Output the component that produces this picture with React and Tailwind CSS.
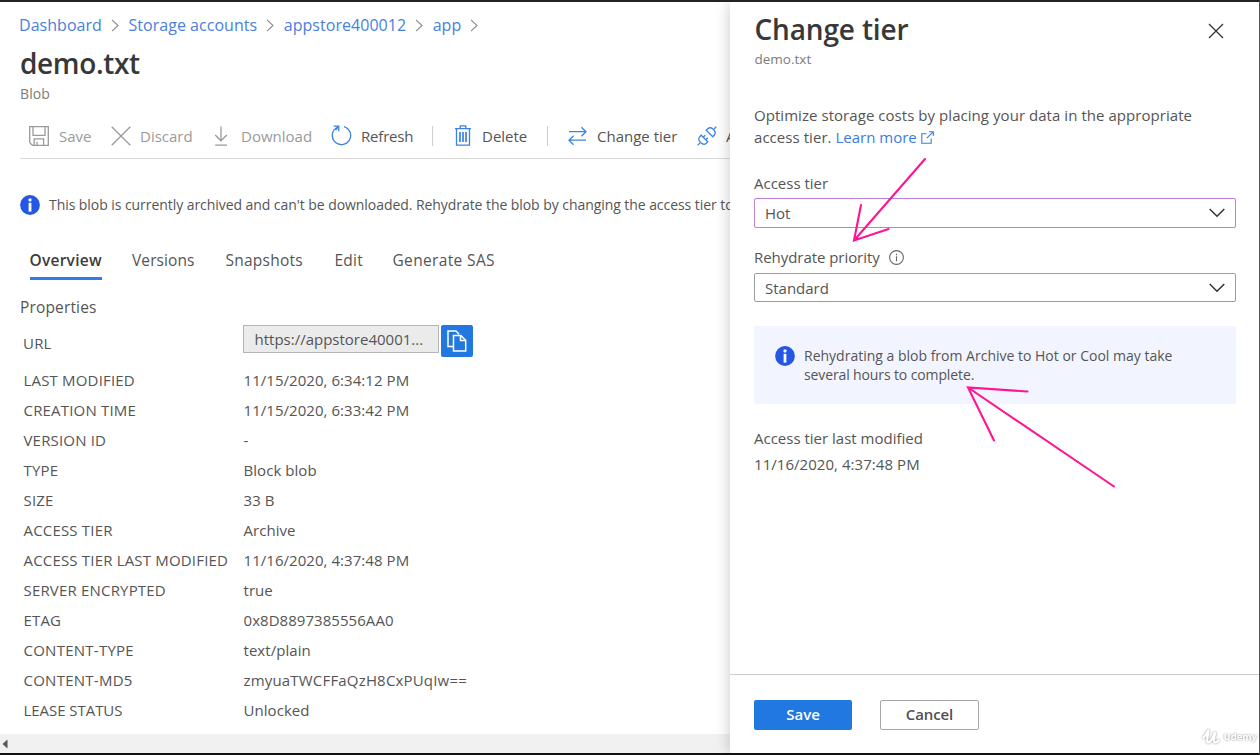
import React from "react";

const crumbs = ["Dashboard", "Storage accounts", "appstore400012", "app"];

const rows = [
  ["LAST MODIFIED", "11/15/2020, 6:34:12 PM"],
  ["CREATION TIME", "11/15/2020, 6:33:42 PM"],
  ["VERSION ID", "-"],
  ["TYPE", "Block blob"],
  ["SIZE", "33 B"],
  ["ACCESS TIER", "Archive"],
  ["ACCESS TIER LAST MODIFIED", "11/16/2020, 4:37:48 PM"],
  ["SERVER ENCRYPTED", "true"],
  ["ETAG", "0x8D8897385556AA0"],
  ["CONTENT-TYPE", "text/plain", "tracking-[0.25px]"],
  ["CONTENT-MD5", "zmyuaTWCFFaQzH8CxPUqIw==", "tracking-[0.25px]", "tracking-[0.18px]"],
  ["LEASE STATUS", "Unlocked", "tracking-[-0.05px]"],
];

function Svg({ w, h, className = "", children, sw = 1.3 }) {
  return (
    <svg
      width={w}
      height={h}
      viewBox={`0 0 ${w} ${h}`}
      fill="none"
      stroke="currentColor"
      strokeWidth={sw}
      className={`shrink-0 ${className}`}
    >
      {children}
    </svg>
  );
}

const SaveIcon = () => (
  <Svg w={20} h={20} className="text-[#9a9a9a]">
    <path d="M.7.7h18.6v18.6H3.4L.7 16.6z" />
    <path d="M4 .7v8.6h12V.7M5.2 19.3v-6.500h9.4v6.500M8 19v-3.3" />
  </Svg>
);
const DiscardIcon = () => (
  <Svg w={20} h={20} className="text-[#9a9a9a]">
    <path d="M.7.7l18.6 18.6M19.3.7L.7 19.3" />
  </Svg>
);
const DownloadIcon = () => (
  <Svg w={16} h={20} className="text-[#9a9a9a]">
    <path d="M8 .5v14M2.2 9L8 14.8 13.8 9M2.2 19.2h11.8" />
  </Svg>
);
const RefreshIcon = () => (
  <Svg w={21} h={21} className="text-[#3b82e6]">
    <path d="M13 1.6a9.2 9.2 0 1 1-6.2.4M2.6 1.2h5.2v5M7.8 1.4L4.6 5" />
  </Svg>
);
const TrashIcon = () => (
  <Svg w={16} h={21} className="text-[#3b82e6]">
    <path d="M0 3.6h16M5.2 3.4V.9h5.6v2.500" />
    <path d="M1.5 3.8v16.4h13V3.8" />
    <path d="M5 7v10M8 7v10M11 7v10" strokeWidth="1.7" />
  </Svg>
);
const SwapIcon = () => (
  <Svg w={19} h={20} className="text-[#3b82e6]">
    <path d="M1 5.7h17M13.4 1.2L18 5.7l-4.6 4.6M18 14.2H1M5.6 9.7L1 14.2l4.6 4.6" />
  </Svg>
);
const PlugIcon = () => (
  <Svg w={20} h={20} className="text-[#3b82e6]">
    <path d="M.6 19.4l2.500-2.500M17 3L19.400.6" />
    <path d="M4.200 9.200l6.600 6.600-1.500 1.400a4 4 0 0 1-5.100-.1l-1.300-1.300a4 4 0 0 1-.1-5.100z" />
    <path d="M15.800 10.800L9.200 4.200l1.500-1.400a4 4 0 0 1 5.100.1l1.300 1.300a4 4 0 0 1 .1 5.100z" />
    <path d="M6.200 11.200l2-2M8.800 13.800l2-2" />
  </Svg>
);
const CopyIcon = () => (
  <Svg w={20} h={22} sw={1.5} className="text-white">
    <path d="M6 16.5H1V1h8l3 3.2" />
    <path d="M6.5 5.5h7.3l4.9 4.8V21H6.5zM13.5 5.8v4.8h5" />
  </Svg>
);
const ExternalIcon = () => (
  <Svg w={13} h={13} sw={1.1} className="text-[#3b7de0]">
    <path d="M5.5 2.8H.8v9.4h9.4V7.5M8 .7h4.3V5M12.2.8L5.8 7.2" />
  </Svg>
);
const ChevronDown = () => (
  <Svg w={16} h={10} sw={1.5} className="text-[#333]">
    <path d="M.7 1l7.3 7.3L15.3 1" />
  </Svg>
);
const Crumb = () => (
  <Svg w={8} h={13} sw={1.1} className="text-[#8c8c8c]">
    <path d="M1 .8l6 5.7-6 5.7" />
  </Svg>
);
const InfoBadge = () => (
  <svg width="20" height="20" viewBox="0 0 20 20" className="shrink-0">
    <circle cx="10" cy="10" r="9.9" fill="#2458e4" />
    <rect x="8.5" y="3.6" width="3" height="2.8" rx=".8" fill="#fff" />
    <rect x="8.6" y="7.8" width="2.8" height="8.8" fill="#fff" />
  </svg>
);

function Select({ label, className }) {
  return (
    <div className={`flex items-center justify-between rounded-[2px] border bg-white pr-[10px] pl-[10px] ${className}`}>
      <span>{label}</span>
      <ChevronDown />
    </div>
  );
}

export default function App() {
  return (
    <div className="relative flex h-[755px] w-[1260px] overflow-hidden border-t-2 border-r border-b-2 border-t-[#222] border-r-[#555] border-b-[#111] bg-white font-['Open_Sans','Noto_Sans',sans-serif] text-[15px] leading-[20px] whitespace-nowrap text-[#555]">
      <main className="flex w-[730px] shrink-0 flex-col overflow-hidden">
        <nav className="flex h-[46px] shrink-0 items-center pl-[19px] text-[16px] tracking-[0.04px] text-[#4a80dc]">
          {crumbs.map((c) => (
            <React.Fragment key={c}>
              <span className="mr-[9px]">{c}</span>
              <span className="mr-[9.5px]">
                <Crumb />
              </span>
            </React.Fragment>
          ))}
        </nav>
        <h1 className="-mt-[3px] h-[39px] shrink-0 pl-[20px] text-[28px] leading-[36px] font-semibold tracking-[-0.35px] text-[#383838]">demo.txt</h1>
        <p className="h-[20px] shrink-0 pl-[20px] text-[14px] tracking-[0.1px] text-[#7c7c7c]">Blob</p>

        <div className="mt-[12px] ml-[20px] flex h-[43px] shrink-0 items-center border-b border-[#d8d8d8] pb-[3px] pl-[9px]">
          <div className="flex w-[82px] shrink-0 items-center gap-[10px] text-[#9a9a9a]">
            <SaveIcon />
            Save
          </div>
          <div className="flex w-[102px] shrink-0 items-center gap-[9px] text-[#9a9a9a]">
            <DiscardIcon />
            Discard
          </div>
          <div className="flex w-[118px] shrink-0 items-center gap-[12px] text-[#9a9a9a]">
            <DownloadIcon />
            Download
          </div>
          <div className="flex w-[101px] shrink-0 items-center gap-[9px] tracking-[-0.2px]">
            <RefreshIcon />
            Refresh
          </div>
          <span className="h-[20px] w-px shrink-0 bg-[#cfcfcf]" />
          <div className="flex w-[114px] shrink-0 items-center gap-[11px] pl-[22px]">
            <TrashIcon />
            Delete
          </div>
          <span className="h-[20px] w-px shrink-0 bg-[#cfcfcf]" />
          <div className="flex w-[149px] shrink-0 items-center gap-[10px] pl-[20px]">
            <SwapIcon />
            Change tier
          </div>
          <div className="flex shrink-0 items-center gap-[9px]">
            <PlugIcon />
            Acquire lease
          </div>
        </div>

        <div className="flex h-[92px] shrink-0 items-center gap-[9.5px] pl-[19.5px] text-[14px] tracking-[-0.06px]">
          <InfoBadge />
          <span>
            This blob is currently archived and can&apos;t be downloaded. Rehydrate the blob by changing the access tier to hot or cool.
          </span>
        </div>

        <div className="-mt-px flex h-[30px] shrink-0 pl-[29.5px] text-[15.5px] tracking-[0.25px]">
          <div className="mr-[30px] w-[72.5px] border-b-[3px] border-[#2f7de0] font-semibold text-[#3c3c3c]">Overview</div>
          <div className="w-[93.5px] tracking-[0.1px]">Versions</div>
          <div className="w-[109px]">Snapshots</div>
          <div className="w-[58px]">Edit</div>
          <div className="tracking-[0.35px]">Generate SAS</div>
        </div>

        <h2 className="mt-[17px] h-[20px] shrink-0 pl-[20px] text-[15.5px] tracking-[0.15px]">Properties</h2>
        <div className="mt-[8px] flex h-[34px] shrink-0 pl-[23px]">
          <div className="w-[220px] pt-[8px] tracking-[0.2px]">URL</div>
          <div className="flex h-[28px] w-[196px] items-center border border-[#b4b4b4] bg-[#ebebeb] pb-px pl-[10.5px]">https://appstore40001...</div>
          <button className="ml-[2px] flex h-[32px] w-[32px] items-center justify-center rounded-[2px] bg-[#2178e0]">
            <CopyIcon />
          </button>
        </div>

        <div className="mt-[6px] shrink-0 pl-[23.5px]">
          {rows.map(([k, v, kt = "tracking-[0.18px]", vt = "tracking-[0.05px]"]) => (
            <div key={k} className="flex h-[30px] items-center pb-px">
              <span className={`w-[220px] ${kt}`}>{k}</span>
              <span className={vt}>{v}</span>
            </div>
          ))}
        </div>

        <div className="mt-auto flex h-[19px] shrink-0 items-center bg-[#f1f1f1] pl-[2px]">
          <svg width="6" height="10" viewBox="0 0 6 10">
            <path d="M5.5.5v9L.5 5z" fill="#555" />
          </svg>
        </div>
      </main>

      <aside className="relative flex flex-1 flex-col bg-white shadow-[0_0_14px_rgba(0,0,0,0.22)]">
        <header className="flex h-[72px] justify-between pt-[8px] pr-[35px] pl-[24.5px]">
          <div>
            <h1 className="text-[28px] leading-[38px] font-semibold tracking-[-0.15px] text-[#383838]">Change tier</h1>
            <p className="mt-px text-[13.5px] leading-[20px] text-[#7c7c7c]">demo.txt</p>
          </div>
          <Svg w={16} h={16} className="mt-[13px] text-[#333]">
            <path d="M1 1l14 14M15 1L1 15" />
          </Svg>
        </header>

        <div className="flex-1 pr-[23px] pl-[24px]">
          <p className="mt-[31px] leading-[21.5px] tracking-[0.05px]">
            Optimize storage costs by placing your data in the appropriate
            <br />
            access tier.{" "}
            <a className="inline-flex items-center gap-[4px] tracking-[0px] text-[#3b7de0]">
              Learn more <ExternalIcon />
            </a>
          </p>
          <div className="mt-[25px] h-[25px]">Access tier</div>
          <Select label="Hot" className="h-[30px] border-[#bd7fd0]" />
          <div className="mt-[19px] flex h-[26px] items-start gap-[9.5px] tracking-[-0.05px]">
            Rehydrate priority
            <Svg w={15} h={15} sw={1.1} className="mt-[3px] text-[#666]">
              <circle cx="7.5" cy="7.5" r="6.9" />
              <path d="M7.5 6.3v5M7.5 3.8v1.4" />
            </Svg>
          </div>
          <Select label="Standard" className="h-[29px] border-[#9c9c9c]" />

          <div className="mt-[24px] flex h-[78px] gap-[9px] rounded-[2px] bg-[#f2f5ff] pt-[20px] pl-[21px]">
            <InfoBadge />
            <p className="pt-px text-[14px] leading-[18.5px]">
              Rehydrating a blob from Archive to Hot or Cool may take
              <br />
              <span className="tracking-[-0.12px]">several hours to complete.</span>
            </p>
          </div>
          <p className="mt-[24px]">Access tier last modified</p>
          <p className="mt-[6px] tracking-[0.05px]">11/16/2020, 4:37:48 PM</p>
        </div>

        <footer className="flex h-[79px] items-start gap-[28px] border-t border-[#cdcdcd] pt-[25px] pl-[24px] leading-[18px] font-semibold">
          <button className="h-[30px] w-[98px] rounded-[2px] bg-[#2178e0] pb-[2px] text-white">Save</button>
          <button className="h-[30px] w-[99px] rounded-[2px] border border-[#a6a6a6] pb-[2px] tracking-[-0.1px] text-[#505050]">Cancel</button>
        </footer>
      </aside>

      <div className="absolute right-[2px] bottom-[8px] flex items-center gap-[3px] text-[9.500px] leading-[14px] font-bold text-white drop-shadow-[0_0_1px_rgba(0,0,0,0.45)]">
        <Svg w={18} h={16} sw={2.4}>
          <path d="M1.500 8.500C4 6 5.500 3.500 6.500 1.500 6 5 4 12 6 13.500 9 13.500 11.500 7.500 13 4 12.500 7 10.800 13 13 13.500 14.500 13.500 15.500 12.500 16.500 11.500" strokeLinecap="round" strokeLinejoin="round" />
        </Svg>
        Udemy
      </div>

      <svg className="pointer-events-none absolute top-[-2px] left-0" width="1260" height="755" viewBox="0 0 1260 755" fill="none" stroke="#ff1493" strokeWidth="2.1" strokeLinecap="round">
        <path d="M925 159L854 240.500M861 205L854 240.500L888.500 229" />
        <path d="M1114 486.500L968 387.500M1027.500 391.500L968 387.500L994 440.500" />
      </svg>
    </div>
  );
}
